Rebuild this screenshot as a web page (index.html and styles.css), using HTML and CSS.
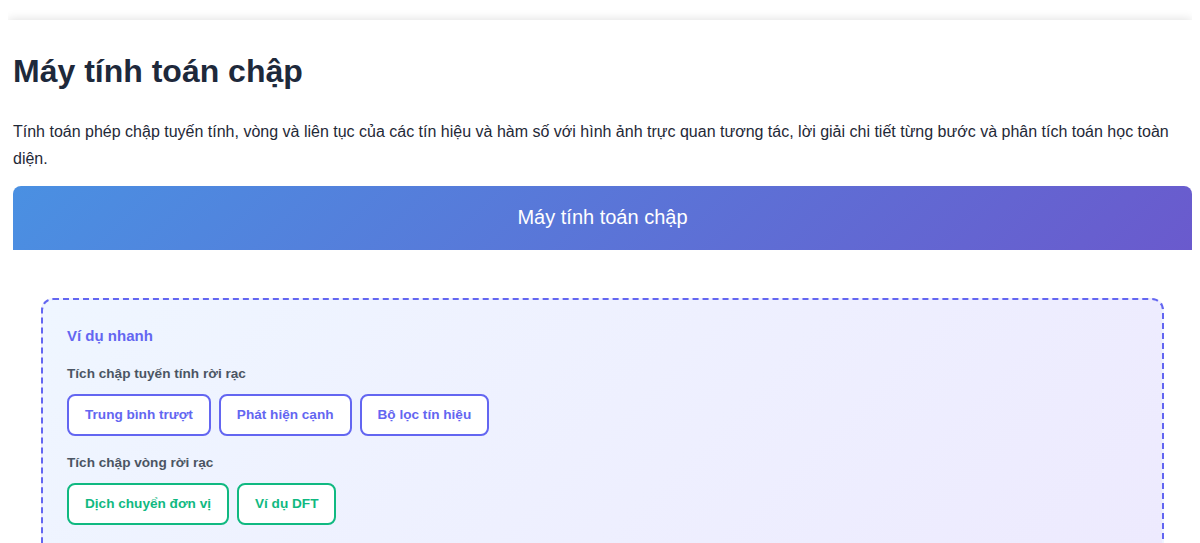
FILE: index.html
```html
<!DOCTYPE html>
<html lang="vi">
<head>
    <meta charset="UTF-8">
    <meta name="viewport" content="width=device-width, initial-scale=1.0">
    <title>Máy tính toán chập</title>
    <link rel="stylesheet" href="styles.css">
</head>
<body>

<div class="page">
    <h1>Máy tính toán chập</h1>
    <p class="intro">Tính toán phép chập tuyến tính, vòng và liên tục của các tín hiệu và hàm số với hình ảnh trực quan tương tác, lời giải chi tiết từng bước và phân tích toán học toàn diện.</p>

    <div class="calculator">
        <div class="calc-header">Máy tính toán chập</div>

        <div class="calc-body">
            <div class="examples">
                <h3>Ví dụ nhanh</h3>

                <div class="example-group">
                    <div class="group-label">Tích chập tuyến tính rời rạc</div>
                    <div class="btn-row">
                        <button class="example-btn">Trung bình trượt</button>
                        <button class="example-btn">Phát hiện cạnh</button>
                        <button class="example-btn">Bộ lọc tín hiệu</button>
                    </div>
                </div>

                <div class="example-group">
                    <div class="group-label">Tích chập vòng rời rạc</div>
                    <div class="btn-row">
                        <button class="example-btn green">Dịch chuyển đơn vị</button>
                        <button class="example-btn green">Ví dụ DFT</button>
                    </div>
                </div>
            </div>
        </div>
    </div>
</div>

</body>
</html>
```

FILE: styles.css
```css
body {
    font-family: "Liberation Sans", Arial, sans-serif;
    margin: 8px;
    background: #fff;
    color: #1f2937;
}
.page {
    margin-top: 12px;
    padding: 12px 0 0 5px;
    background: #fff;
    box-shadow: 0 0 10px rgba(0, 0, 0, 0.14);
    min-height: 600px;
}
.page h1 {
    font-size: 32px;
    line-height: 37px;
    color: #1e293b;
    margin: 21px 0 28px;
}
.intro {
    font-size: 16px;
    line-height: 27px;
    margin: 0 0 14px;
    color: #1f2937;
}
.calc-header {
    background: linear-gradient(135deg, #4a90e2, #6a5acd);
    color: #fff;
    font-size: 20px;
    text-align: center;
    height: 64px;
    line-height: 63px;
    border-radius: 8px 8px 0 0;
}
.calc-body {
    padding: 48px 28px;
}
.examples {
    border: 2px dashed #6366f1;
    border-radius: 12px;
    padding: 27px 24px 24px;
    background: linear-gradient(135deg, #eff6ff, #ede9fe);
    min-height: 300px;
}
.examples h3 {
    margin: 0 0 22px;
    font-size: 15px;
    line-height: 17px;
    color: #6366f1;
}
.example-group {
    margin-bottom: 19px;
}
.group-label {
    font-size: 13.6px;
    line-height: 16px;
    font-weight: bold;
    color: #4b5563;
    margin-bottom: 12px;
}
.btn-row {
    display: flex;
    gap: 8px;
}
.example-btn {
    font-family: inherit;
    font-size: 13.6px;
    line-height: 18px;
    font-weight: bold;
    padding: 10px 16px;
    background: #fff;
    color: #6366f1;
    border: 2px solid #6366f1;
    border-radius: 8px;
    cursor: pointer;
}
.example-btn.green {
    color: #10b981;
    border-color: #10b981;
}
```
